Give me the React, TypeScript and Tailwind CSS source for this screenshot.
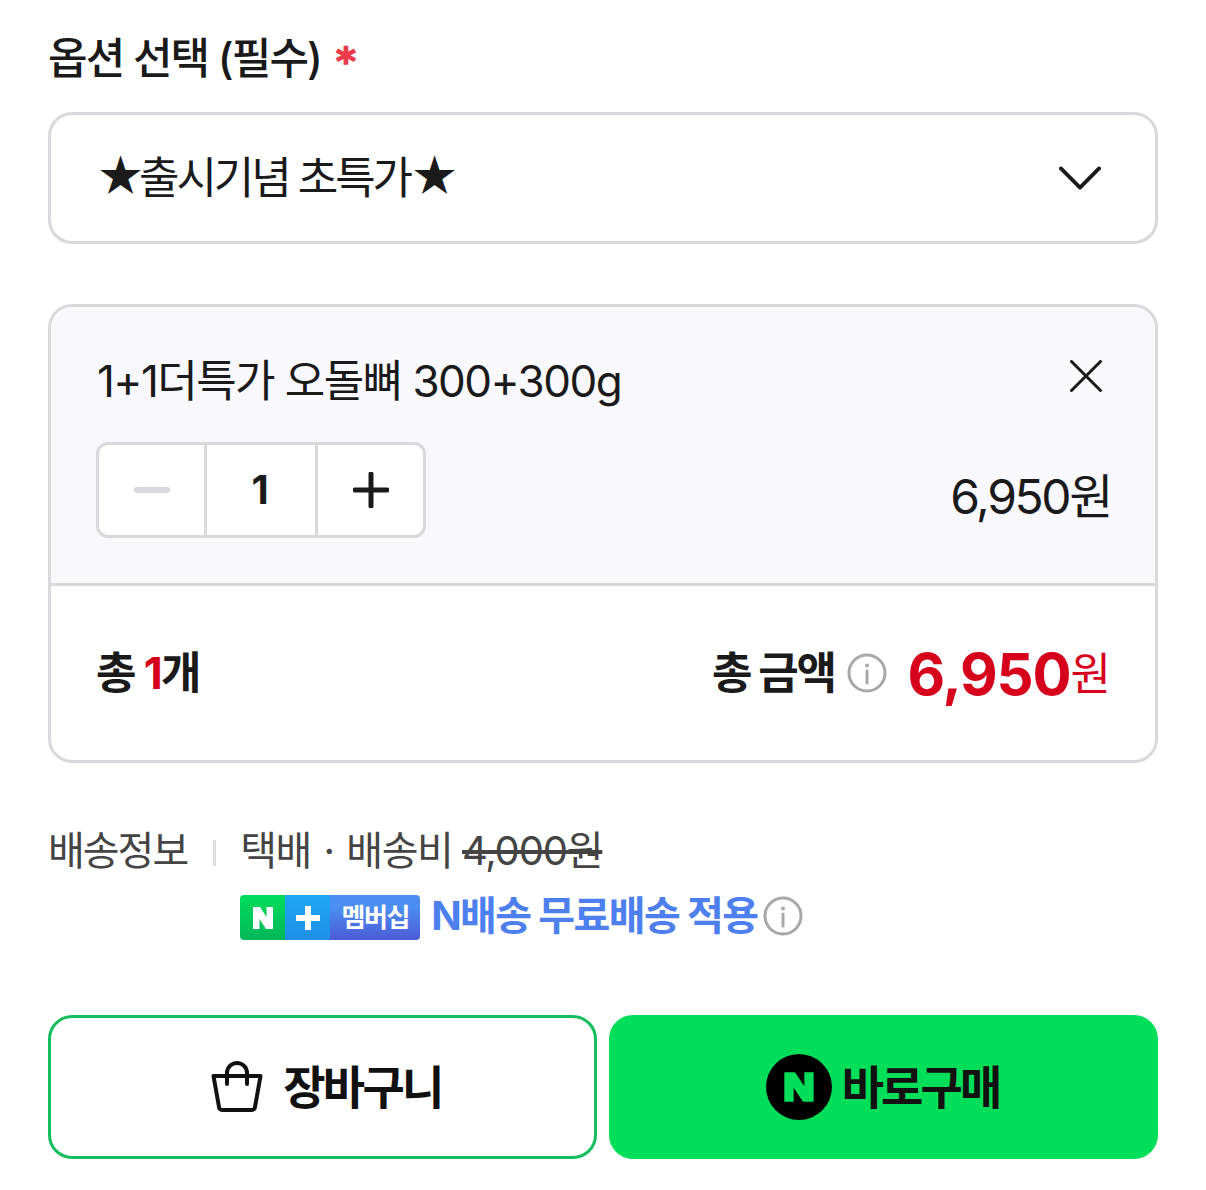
const FONT = "font-['Inter','Noto_Sans_CJK_KR',sans-serif]";

const InfoIcon = ({ className }: { className: string }) => (
  <svg viewBox="0 0 40 40" className={className} fill="none">
    <circle cx="20" cy="20" r="18" stroke="#a8a8a8" strokeWidth="3" />
    <circle cx="20" cy="12.5" r="2" fill="#a8a8a8" />
    <path d="M20 18v12" stroke="#a8a8a8" strokeWidth="3" strokeLinecap="round" />
  </svg>
);

const MembershipBadge = () => (
  <div className="flex h-[45px] w-[180px] overflow-hidden rounded-[4px]">
    <div className="flex w-[45px] items-center justify-center bg-gradient-to-b from-[#00de5a] to-[#02b75a]">
      <svg viewBox="0 0 24 24" className="h-[24px] w-[24px]">
        <path d="M2 1h7l6.5 10V1H22v22h-7L8.500 13v10H2z" fill="#fff" />
      </svg>
    </div>
    <div className="flex w-[45px] items-center justify-center bg-gradient-to-b from-[#1fa8f2] to-[#1e8fe8]">
      <svg viewBox="0 0 24 24" className="h-[24px] w-[24px]">
        <path d="M9 0h6v9h9v6h-9v9H9v-9H0V9h9z" fill="#fff" />
      </svg>
    </div>
    <div className="flex flex-1 items-center justify-center bg-gradient-to-b from-[#4b8df0] via-[#4b8df0] via-[30%] to-[#4c5ad6] text-[26px] font-bold tracking-[-1.5px] text-white">
      멤버십
    </div>
  </div>
);

export default function App() {
  return (
    <div className={`${FONT} min-h-[1190px] w-[1206px] bg-white px-12 pt-[28px] text-[#1a1a1a]`}>
      <div className="flex h-[60px] items-center">
        <span className="text-[43px] font-medium leading-[60px] tracking-[-1.9px]">옵션 선택 (필수)</span>
        <span className="ml-[15px] mt-[6px] font-['DejaVu_Sans',sans-serif] text-[38px] font-bold leading-none text-[#ec3b4b] [-webkit-text-stroke:1.5px_#ec3b4b]">*</span>
      </div>

      <div className="mt-[24px] flex h-[132px] items-center justify-between rounded-[24px] border-[3px] border-[#d7d9dc] pl-[45px] pr-[54px]">
        <span className="mb-[4px] text-[44px] leading-none tracking-[-3.1px]">
          <span className="mr-[-3px] text-[47px]">★</span>출시기념 초특가<span className="text-[47px]">★</span>
        </span>
        <svg viewBox="0 0 44 26" className="h-[26px] w-[42px]" fill="none">
          <path d="M2 3l20 20L42 3" stroke="#1a1a1a" strokeWidth="4" strokeLinecap="round" strokeLinejoin="round" />
        </svg>
      </div>

      <div className="mt-[60px] overflow-hidden rounded-[24px] border-[3px] border-[#d7d9dc]">
        <div className="h-[279px] border-b-[3px] border-[#d7d9dc] bg-[#f8f8fd] px-[45px] pt-[44px]">
          <div className="flex items-start justify-between">
            <span className="ml-[1px] text-[44px] leading-[60px] tracking-[-1.55px]">1+1더특가 오돌뼈 300+300g</span>
            <svg viewBox="0 0 32 32" className="mr-[8px] mt-[9px] h-[32px] w-[32px]" fill="none">
              <path d="M1.500 1.500l29 29M30.500 1.500l-29 29" stroke="#1a1a1a" strokeWidth="3" strokeLinecap="round" />
            </svg>
          </div>
          <div className="mt-[31px] flex items-center justify-between">
            <div className="flex h-[96px] w-[330px] rounded-[12px] border-[3px] border-[#d7d9dc] bg-white">
              <div className="flex w-[108px] items-center justify-center border-r-[3px] border-[#d7d9dc]">
                <div className="h-[6px] w-[36px] rounded-full bg-[#d7d9dc]" />
              </div>
              <div className="flex w-[111px] items-center justify-center border-r-[3px] border-[#d7d9dc] pr-[2px] text-[40px] font-bold">1</div>
              <div className="flex flex-1 items-center justify-center">
                <svg viewBox="0 0 36 36" className="h-[36px] w-[36px]" fill="none">
                  <path d="M18 2v32M2 18h32" stroke="#1a1a1a" strokeWidth="5" strokeLinecap="round" />
                </svg>
              </div>
            </div>
            <span className="-mr-[1px] mt-[14px] text-[48px] leading-none tracking-[-2.4px]">6,950원</span>
          </div>
        </div>
        <div className="flex h-[174px] items-center justify-between px-[45px]">
          <span className="text-[44px] font-bold tracking-[-1.6px]">
            총 <span className="text-[#d6001c]">1</span>개
          </span>
          <div className="flex items-center">
            <span className="text-[44px] font-bold tracking-[-2.3px]">총 금액</span>
            <InfoIcon className="ml-[12px] h-[40px] w-[40px]" />
            <span className="ml-[21px] flex items-center text-[#d6001c]">
              <span className="mt-[1px] text-[58px] font-bold leading-none tracking-[-1.1px]">6,950</span>
              <span className="mt-[2px] text-[44px] leading-none tracking-[-1px]">원</span>
            </span>
          </div>
        </div>
      </div>

      <div className="mt-[61px] flex">
        <span className="text-[40px] leading-[54px] tracking-[-2px] text-[#444444]">배송정보</span>
        <div className="ml-[26px] mt-[16px] h-[26px] w-[3px] bg-[#dddddd]" />
        <div className="ml-[24px]">
          <div className="text-[40px] leading-[54px] tracking-[-1.5px] text-[#444444]">
            택배 <span className="mx-[3px]">·</span> 배송비 <span className="line-through tracking-[-1.2px]">4,000원</span>
          </div>
          <div className="mt-[13px] flex items-center">
            <MembershipBadge />
            <span className="mb-[3px] ml-[11px] text-[40px] font-bold leading-[50px] tracking-[-1.6px] text-[#4d80ee]">N배송 무료배송 적용</span>
            <InfoIcon className="mb-[4px] ml-[6px] h-[40px] w-[40px]" />
          </div>
        </div>
      </div>

      <div className="mt-[71px] grid grid-cols-2 gap-[12px]">
        <div className="flex h-[144px] items-center justify-center rounded-[24px] border-[3px] border-[#14bd5d]">
          <svg viewBox="0 0 52 52" className="ml-[8px] mr-[20px] h-[52px] w-[52px]" fill="none" stroke="#111111" strokeWidth="4" strokeLinecap="round" strokeLinejoin="round">
            <path d="M2.500 15h47l-5.500 31a3 3 0 0 1-3 3H11a3 3 0 0 1-3-3z" />
            <path d="M16 23V12a10 10 0 0 1 20 0v11" />
          </svg>
          <span className="text-[46px] font-bold tracking-[-2.7px] text-[#111111]">장바구니</span>
        </div>
        <div className="flex h-[144px] items-center justify-center rounded-[24px] bg-[#00de5a]">
          <div className="-ml-[2px] mr-[10px] flex h-[66px] w-[66px] items-center justify-center rounded-full bg-black">
            <svg viewBox="0 0 24 24" className="h-[32px] w-[32px]">
              <path d="M1 1h8l7 10.500V1h7v22h-8L8 12.500V23H1z" fill="#00de5a" />
            </svg>
          </div>
          <span className="text-[46px] font-bold tracking-[-2.9px] text-[#111111]">바로구매</span>
        </div>
      </div>
    </div>
  );
}
